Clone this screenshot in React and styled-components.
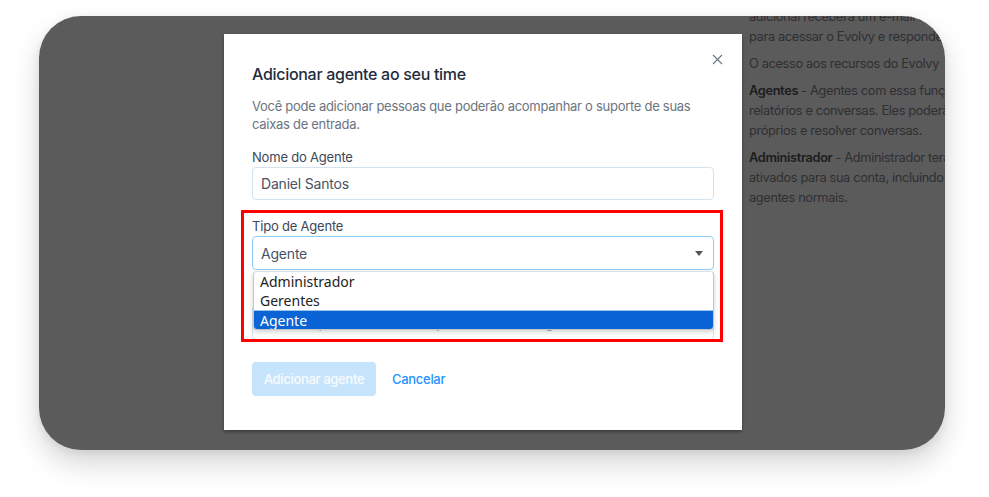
import React from "react";
import styled, { createGlobalStyle } from "styled-components";

const GlobalStyle = createGlobalStyle`
  html, body {
    margin: 0;
    padding: 0;
    background: #ffffff;
  }
  body {
    font-family: Inter, "Noto Sans", sans-serif;
  }
`;

const Page = styled.div`
  width: 989px;
  height: 497px;
  padding: 16px 0 0 39px;
  box-sizing: border-box;
`;

const Card = styled.div`
  width: 906px;
  height: 434px;
  background: #5b5b5c;
  border-radius: 42px;
  overflow: hidden;
  display: flex;
  align-items: flex-start;
  padding-left: 185px;
  box-sizing: border-box;
  box-shadow: 0 14px 28px rgba(0, 0, 0, 0.16), 0 2px 8px rgba(0, 0, 0, 0.08);
`;

const Modal = styled.div`
  position: relative;
  flex: 0 0 518px;
  height: 396px;
  margin-top: 18px;
  background: #ffffff;
  box-sizing: border-box;
  padding: 30px 28px 0 28px;
  box-shadow: 0 2px 3px rgba(0, 0, 0, 0.35);
  display: flex;
  flex-direction: column;
`;

const CloseButton = styled.button`
  position: absolute;
  top: 18px;
  right: 18px;
  width: 14px;
  height: 14px;
  padding: 0;
  border: 0;
  background: none;
  display: flex;
  align-items: center;
  justify-content: center;
`;

const Title = styled.h2`
  margin: 0;
  font-size: 16px;
  line-height: 20px;
  font-weight: 500;
  letter-spacing: -0.3px;
  color: #1f2d3d;
`;

const Description = styled.p`
  margin: 13px 0 0;
  font-size: 13px;
  line-height: 18px;
  color: #6b7480;
  letter-spacing: -0.28px;
`;

const Field = styled.div`
  position: relative;
  margin-top: ${(p) => p.$top || 0}px;
  display: flex;
  flex-direction: column;
`;

const Label = styled.label`
  font-size: 13px;
  line-height: 18px;
  color: #3c4858;
  letter-spacing: -0.2px;
  margin-bottom: 1px;
`;

const Input = styled.div`
  height: ${(p) => p.$h || 33}px;
  box-sizing: border-box;
  border: 1px solid ${(p) => (p.$focus ? "#8fcdf5" : "#d4e2ee")};
  border-radius: 4px;
  padding: 0 8px;
  display: flex;
  align-items: center;
  justify-content: space-between;
  font-size: 14px;
  color: ${(p) => (p.$placeholder ? "#9aa3ad" : "#465364")};
  letter-spacing: -0.2px;
  background: #fff;
`;

const Arrow = styled.span`
  width: 0;
  height: 0;
  border-left: 4px solid transparent;
  border-right: 4px solid transparent;
  border-top: 5px solid #555;
  margin-right: 2px;
`;

const OptionList = styled.div`
  position: absolute;
  top: 54px;
  left: 1px;
  right: 0;
  background: #fff;
  border: 1px solid #c4c8cc;
  border-top-color: #dde0e3;
  border-radius: 4px;
  box-shadow: 0 2px 5px rgba(0, 0, 0, 0.18);
  z-index: 2;
  overflow: hidden;
`;

const Option = styled.div`
  height: 19px;
  line-height: 19px;
  padding: 0 6px;
  font-family: "Noto Sans", "Open Sans", sans-serif;
  font-size: 14px;
  color: ${(p) => (p.$selected ? "#ffffff" : "#222")};
  background: ${(p) => (p.$selected ? "#0a64d5" : "transparent")};
  border-top: ${(p) => (p.$selected ? "1px solid #9ec3ea" : "0")};
  box-sizing: border-box;
`;

const Highlight = styled.div`
  position: absolute;
  left: 17px;
  top: 176px;
  width: 482px;
  height: 132px;
  border: 3px solid #ff0000;
  box-sizing: border-box;
  pointer-events: none;
  z-index: 3;
`;

const Actions = styled.div`
  margin-top: 22px;
  display: flex;
  align-items: center;
  gap: 16px;
`;

const PrimaryButton = styled.button`
  height: 34px;
  width: 124px;
  border: 0;
  border-radius: 4px;
  background: #c6e4fb;
  color: #f4f9fe;
  font-family: Inter, sans-serif;
  font-size: 13px;
  font-weight: 600;
  letter-spacing: -0.4px;
`;

const LinkButton = styled.button`
  border: 0;
  background: none;
  padding: 0;
  color: #1f93ff;
  font-family: Inter, sans-serif;
  font-size: 13px;
  font-weight: 500;
  letter-spacing: -0.3px;
`;

const SideText = styled.div`
  flex: 0 0 auto;
  width: 260px;
  margin: -9px 0 0 7px;
  font-size: 12.8px;
  line-height: 20px;
  letter-spacing: -0.35px;
  color: #2f2f30;
  white-space: nowrap;
`;

const Para = styled.p`
  margin: 0 0 7px;
`;

const Strong = styled.strong`
  font-weight: 600;
  color: #1c1c1d;
`;

const CloseIcon = () => (
  <svg width="11" height="11" viewBox="0 0 11 11">
    <path d="M1 1 L10 10 M10 1 L1 10" stroke="#6b7480" strokeWidth="1.1" fill="none" />
  </svg>
);

const App = () => {
  return (
    <>
      <GlobalStyle />
      <Page>
        <Card>
          <Modal>
            <CloseButton>
              <CloseIcon />
            </CloseButton>
            <Title>Adicionar agente ao seu time</Title>
            <Description>
              Você pode adicionar pessoas que poderão acompanhar o suporte de suas
              <br />
              caixas de entrada.
            </Description>
            <Field $top={15}>
              <Label>Nome do Agente</Label>
              <Input>Daniel Santos</Input>
            </Field>
            <Field $top={17}>
              <Label>Tipo de Agente</Label>
              <Input $focus $h={34}>
                Agente
                <Arrow />
              </Input>
              <OptionList>
                <Option>Administrador</Option>
                <Option>Gerentes</Option>
                <Option $selected>Agente</Option>
              </OptionList>
            </Field>
            <Field $top={35}>
              <Input $placeholder $h={35}>Por favor, insira um endereço de e-mail do agente</Input>
            </Field>
            <Actions>
              <PrimaryButton>Adicionar agente</PrimaryButton>
              <LinkButton>Cancelar</LinkButton>
            </Actions>
            <Highlight />
          </Modal>
          <SideText>
            <Para>
              adicional receberá um e-mail de confirmação
              <br />
              para acessar o Evolvy e responder
            </Para>
            <Para>O acesso aos recursos do Evolvy</Para>
            <Para>
              <Strong>Agentes</Strong> - Agentes com essa função
              <br />
              relatórios e conversas. Eles poderão
              <br />
              próprios e resolver conversas.
            </Para>
            <Para>
              <Strong>Administrador</Strong> - Administrador terá
              <br />
              ativados para sua conta, incluindo
              <br />
              agentes normais.
            </Para>
          </SideText>
        </Card>
      </Page>
    </>
  );
};

export default App;
